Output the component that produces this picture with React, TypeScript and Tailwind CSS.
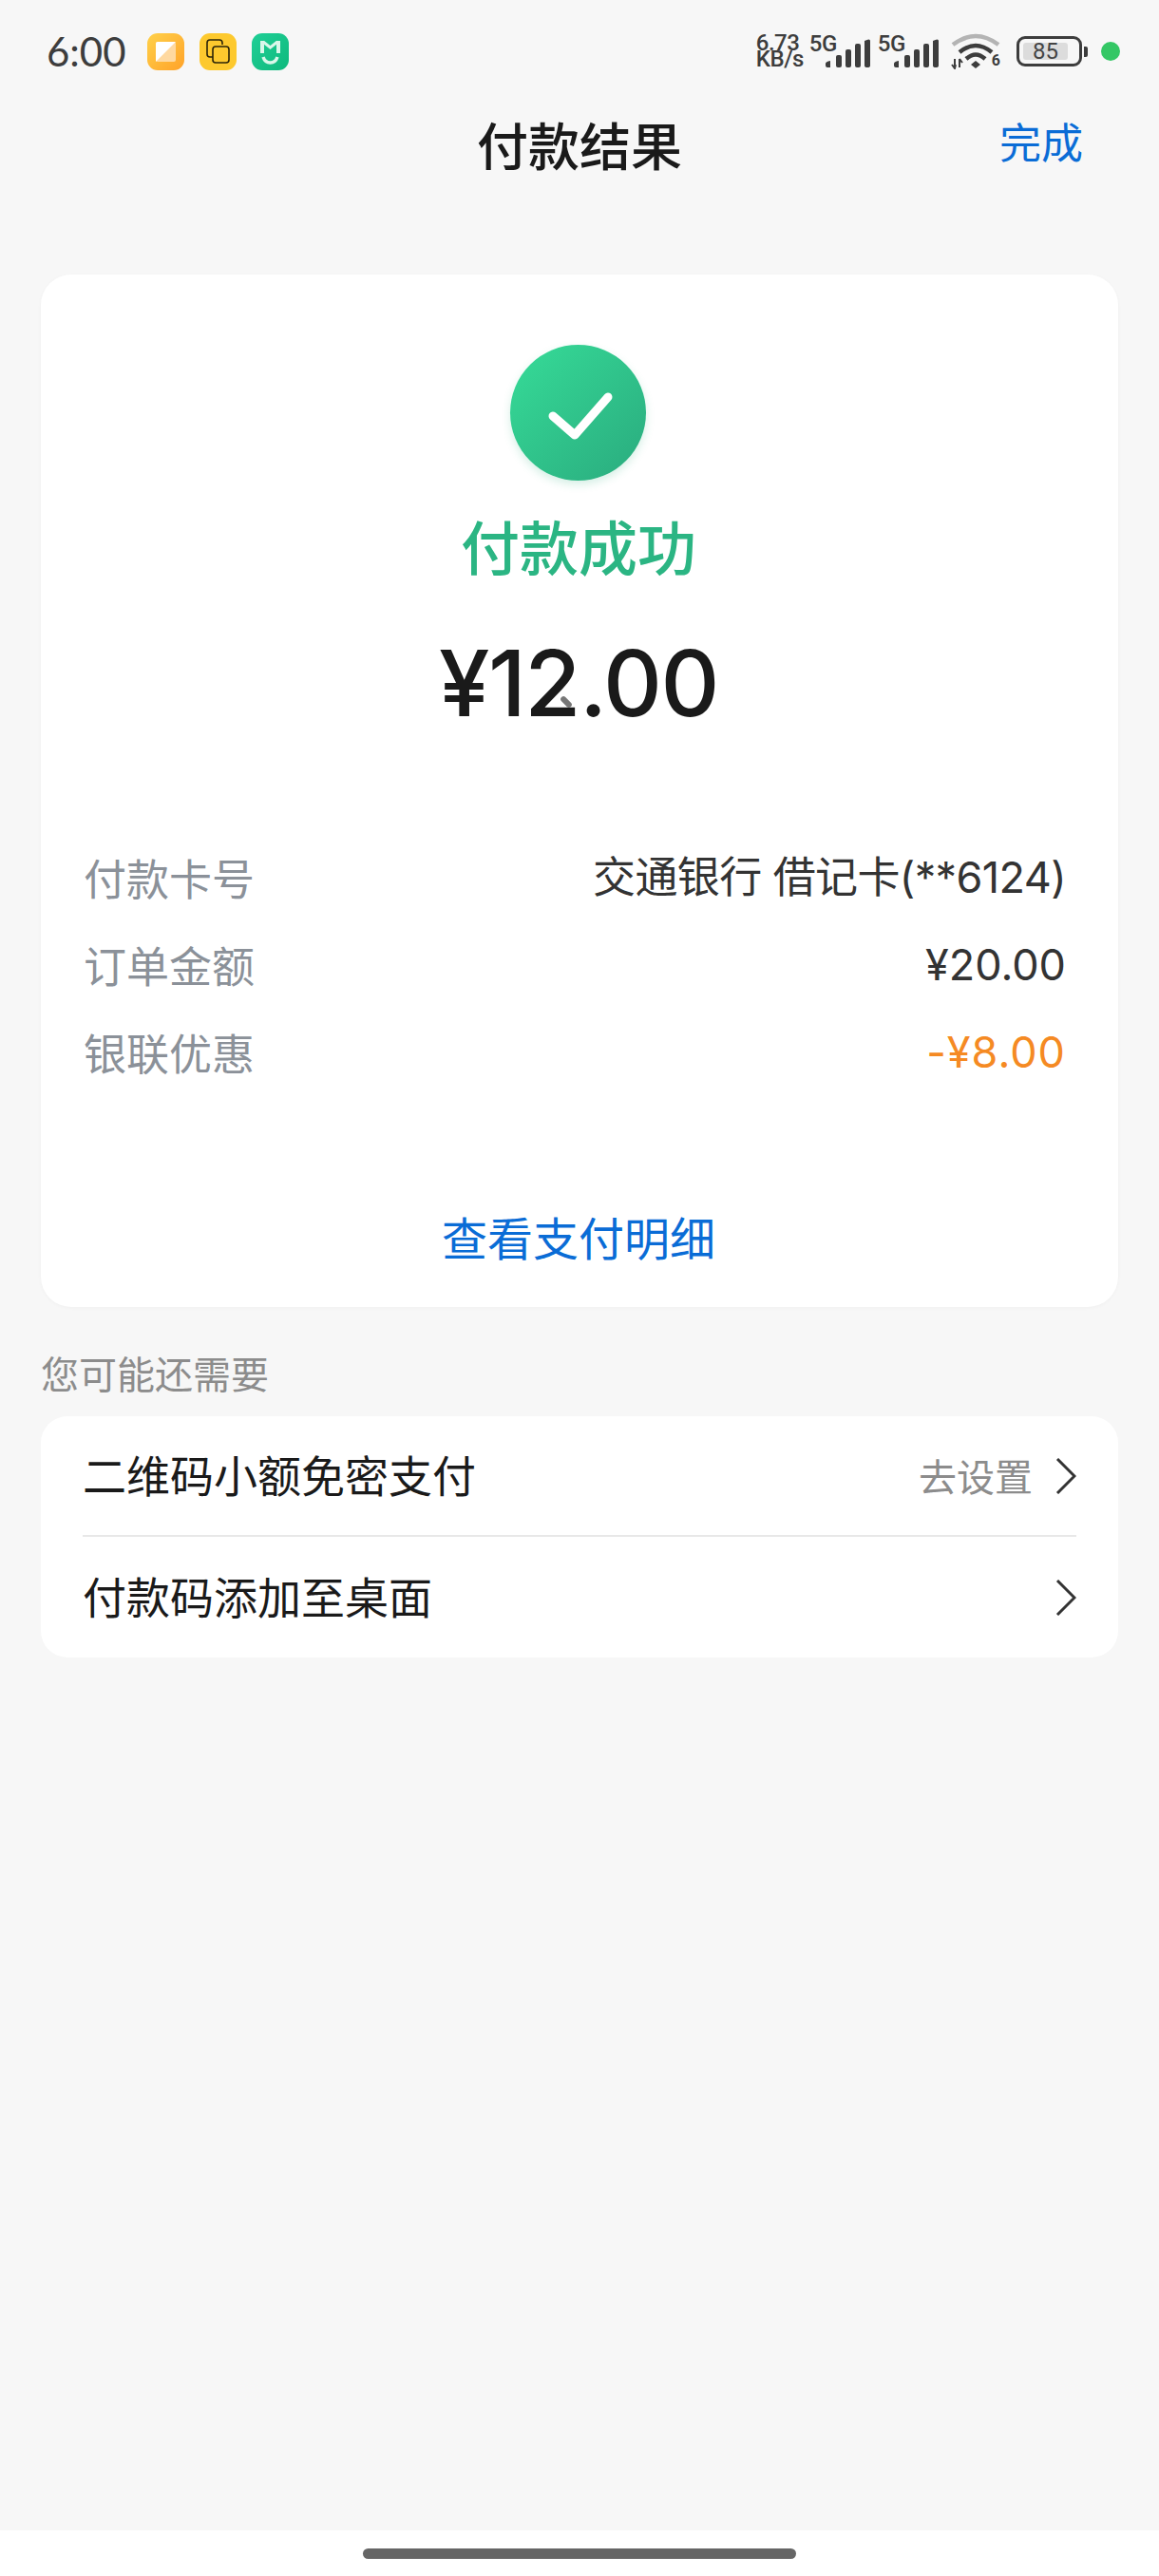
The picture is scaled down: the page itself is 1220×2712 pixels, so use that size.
import { ReactNode } from "react";

const cjk = "font-['Noto_Sans_CJK_SC','Noto_Sans',sans-serif]";

function AppIcon({ className, children }: { className: string; children: ReactNode }) {
  return (
    <div className={`h-[39px] w-[39px] rounded-[11px] flex items-center justify-center ${className}`}>
      {children}
    </div>
  );
}

function SignalBars() {
  return (
    <svg width="48" height="32" viewBox="0 0 48 32" className="text-[#3d3d3d]" fill="currentColor">
      <path d="M1 27 Q1 25 6 24 V31 H3 Q1 31 1 29 Z" />
      <rect x="12" y="18" width="6" height="13" rx="2" />
      <rect x="22" y="12" width="6" height="19" rx="2" />
      <rect x="32" y="6" width="6" height="25" rx="2" />
      <path d="M42 3 Q48 0 48 3 V29 Q48 31 45 31 Q42 31 42 29 Z" />
    </svg>
  );
}

function Signal() {
  return (
    <div className="flex items-start">
      <span className="w-[28px] text-[24px] leading-[18px] font-medium text-[#3d3d3d] font-['Roboto',sans-serif] tracking-[-0.5px]">
        5G
      </span>
      <div className="-ml-[12px] mt-[3px]">
        <SignalBars />
      </div>
    </div>
  );
}

function StatusBar() {
  return (
    <div className="h-[108px] pl-[49px] pr-[41px] flex items-center justify-between">
      <div className="flex items-center">
        <span className="text-[42px] leading-none text-[#3d3d3d] font-['Lato',sans-serif] w-[106px]">6:00</span>
        <div className="flex gap-[16px]">
          <AppIcon className="bg-gradient-to-br from-[#ffd149] to-[#ffa228]">
            <svg width="21" height="21" viewBox="0 0 21 21">
              <rect width="21" height="21" rx="2" fill="#ffd9a0" />
              <path d="M0 2 Q0 0 2 0 H21 L0 21 Z" fill="#fff" />
            </svg>
          </AppIcon>
          <AppIcon className="bg-[#fdc92e]">
            <svg width="25" height="26" viewBox="0 0 25 26" fill="none" stroke="#2b2408" strokeWidth="1.6">
              <path d="M7 19 H4 Q1 19 1 16 V4 Q1 1 4 1 H14 Q17 1 17 4 V6" />
              <rect x="7" y="8" width="17" height="17" rx="3" />
            </svg>
          </AppIcon>
          <AppIcon className="bg-gradient-to-br from-[#1fcf96] to-[#0eb97d]">
            <svg width="23" height="27" viewBox="0 0 23 27" fill="none" stroke="#d9f7ea" strokeWidth="4">
              <path d="M3 2 V15" />
              <path d="M20 2 V15" />
              <path d="M4 3 L11.5 9 L19 3" strokeWidth="3" />
              <path d="M4 19 Q6 25 11.5 25 Q17 25 19 19" strokeWidth="3.5" />
            </svg>
          </AppIcon>
        </div>
      </div>
      <div className="flex items-center text-[#3d3d3d]">
        <div className="w-[56px] font-['Roboto',sans-serif] font-medium text-[24px] leading-[17px] tracking-[-0.5px]">
          <div>6.73</div>
          <div>KB/s</div>
        </div>
        <div className="flex gap-[8px]">
          <Signal />
          <Signal />
        </div>
        <svg width="52" height="38" viewBox="0 0 52 38" className="ml-[13px]" fill="none">
          <path d="M2 12 Q26 -6 50 12" stroke="#b4b4b4" strokeWidth="4.5" />
          <path d="M9 20 Q26 6 43 20" stroke="#3d3d3d" strokeWidth="4.5" />
          <path d="M16 27 Q26 18 36 27" stroke="#3d3d3d" strokeWidth="4.5" />
          <path d="M21 33 L26 29 L31 33 L26 37 Z" fill="#3d3d3d" />
          <path d="M4 27 V36 M1 33 L4 37 L5 33 M9 36 V27 M9 27 L12 31" stroke="#3d3d3d" strokeWidth="2" />
        </svg>
        <span className="-ml-[9px] mt-[19px] text-[16px] leading-none font-bold font-['Roboto',sans-serif]">6</span>
        <div className="ml-[17px] h-[32px] w-[69px] rounded-[9px] border-[3px] border-[#3d3d3d] p-[4px] pr-[12px]">
          <div className="h-full rounded-[3px] bg-[#dcdcdc] flex items-center justify-center text-[24px] leading-none font-['Roboto',sans-serif] text-[#444]">
            85
          </div>
        </div>
        <div className="ml-[2px] h-[11px] w-[4px] rounded-r-[2px] bg-[#3d3d3d]" />
        <div className="ml-[14px] h-[20px] w-[20px] rounded-full bg-[#34c765]" />
      </div>
    </div>
  );
}

function Row({ label, value, valueClass }: { label: string; value: string; valueClass: string }) {
  return (
    <div className="h-[92px] flex items-center justify-between">
      <span className="pb-[4px] text-[45px] leading-none text-[#8b9199]">{label}</span>
      <span className={`pb-[4px] text-[45px] leading-none font-['Inter','Noto_Sans_CJK_SC',sans-serif] ${valueClass}`}>{value}</span>
    </div>
  );
}

function Chevron() {
  return (
    <svg width="22" height="38" viewBox="0 0 22 38" fill="none" stroke="#333" strokeWidth="3">
      <path d="M2 1 L20 19 L2 37" />
    </svg>
  );
}

export default function App() {
  return (
    <div className={`h-[2712px] flex flex-col bg-[#f7f7f7] ${cjk}`}>
      <StatusBar />
      <header className="h-[90px] relative flex items-center justify-center">
        <h1 className="pb-[2px] text-[54px] leading-none font-medium text-[#1a1a1a]">付款结果</h1>
        <span className="absolute right-[80px] top-[18px] text-[44px] leading-none text-[#0a6cd6]">完成</span>
      </header>
      <main className="flex-1 px-[43px] pt-[91px]">
        <section className="h-[1087px] rounded-[32px] bg-white shadow-[0_1px_4px_rgba(0,0,0,0.03)] flex flex-col items-center pt-[74px]">
          <div className="-ml-[3px] h-[143px] w-[143px] rounded-full bg-gradient-to-br from-[#36dc98] to-[#2aab7e] shadow-[0_4px_10px_rgba(43,176,127,0.2)] flex items-center justify-center">
            <svg width="143" height="143" viewBox="0 0 143 143" fill="none" stroke="#fff" strokeWidth="9" strokeLinecap="round" strokeLinejoin="round">
              <path d="M45 75 L68 95 L103 55" />
            </svg>
          </div>
          <div className="-ml-[2px] mt-[37px] text-[62px] leading-none font-medium text-[#2bb583]">付款成功</div>
          <div className="-ml-[2px] relative mt-[66px] h-[96px] flex items-center text-[96px] leading-none font-medium text-[#1a1a1a] font-['Inter',sans-serif] tracking-[-1.5px]">
            ¥12.00
            <span className="absolute left-[127px] top-[65px] h-[6px] w-[14px] rotate-45 rounded-full bg-[#777]" />
          </div>
          <div className="mt-[112px] w-full pl-[45px] pr-[55px] flex flex-col">
            <Row label="付款卡号" value="交通银行 借记卡(**6124)" valueClass="text-[#333] tracking-[-0.6px]" />
            <Row label="订单金额" value="¥20.00" valueClass="text-[#333]" />
            <Row label="银联优惠" value="-¥8.00" valueClass="text-[#f58a23] tracking-[1px]" />
          </div>
          <div className="-ml-[2px] mt-[122px] text-[48px] leading-none text-[#0a6cd6]">查看支付明细</div>
        </section>
        <div className="mt-[48px] h-[42px] flex items-center text-[40px] leading-none text-[#8c8c8c]">您可能还需要</div>
        <section className="mt-[25px] rounded-[28px] bg-white pl-[44px] pr-[44px]">
          <div className="h-[127px] border-b-2 border-[#e8e8e8] flex items-center justify-between">
            <span className="pb-[6px] text-[46px] leading-none text-[#1a1a1a]">二维码小额免密支付</span>
            <div className="flex items-center gap-[24px]">
              <span className="pb-[2px] text-[40px] leading-none text-[#8c8c8c]">去设置</span>
              <Chevron />
            </div>
          </div>
          <div className="h-[127px] flex items-center justify-between">
            <span className="pb-[6px] text-[46px] leading-none text-[#1a1a1a]">付款码添加至桌面</span>
            <Chevron />
          </div>
        </section>
      </main>
      <footer className="h-[48px] bg-white flex items-center justify-center">
        <div className="h-[11px] w-[456px] rounded-full bg-[#666]" />
      </footer>
    </div>
  );
}
